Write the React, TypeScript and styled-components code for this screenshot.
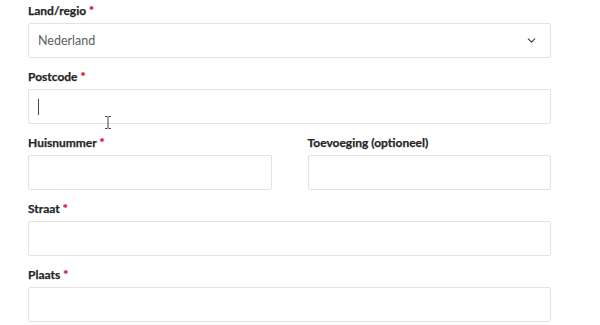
import styled, { createGlobalStyle } from "styled-components";
import { ChevronDown } from "lucide-react";

const GlobalStyle = createGlobalStyle`
  html, body {
    margin: 0;
    background: #ffffff;
    font-family: Lato, "Open Sans", sans-serif;
  }
`;

export default function App() {
  return (
    <>
      <GlobalStyle />
      <Form>
        <Field>
          <Label>
            Land/regio <Required>*</Required>
          </Label>
          <Box>
            <Value>Nederland</Value>
            <ChevronDown size={13} strokeWidth={2} color="#3a3a3a" />
          </Box>
        </Field>
        <Field>
          <Label>
            Postcode <Required>*</Required>
          </Label>
          <Box>
            <Caret />
          </Box>
        </Field>
        <Row>
          <Field>
            <Label>
              Huisnummer <Required>*</Required>
            </Label>
            <Box />
          </Field>
          <Field>
            <Label>Toevoeging (optioneel)</Label>
            <Box />
          </Field>
        </Row>
        <Field>
          <Label>
            Straat <Required>*</Required>
          </Label>
          <Box />
        </Field>
        <Field>
          <Label>
            Plaats <Required>*</Required>
          </Label>
          <Box />
        </Field>
        <MouseCursor width="8" height="13" viewBox="0 0 8 13">
          <path
            d="M1 0.5h2.2L4 1.4l0.8-0.9H7M4 1.4v10.2M1 12.5h2.2L4 11.6l0.8 0.9H7"
            fill="none"
            stroke="#444"
            strokeWidth="1"
          />
        </MouseCursor>
      </Form>
    </>
  );
}

const Form = styled.div`
  position: relative;
  width: 523px;
  padding: 3px 0 0 28px;
  display: flex;
  flex-direction: column;
  gap: 11px;
`;

const Field = styled.div`
  display: flex;
  flex-direction: column;
  gap: 4px;
  flex: 1;
`;

const Row = styled.div`
  display: flex;
  gap: 36px;
`;

const Label = styled.label`
  font-size: 12px;
  line-height: 16px;
  font-weight: 700;
  color: #262626;
  -webkit-text-stroke: 0.25px #262626;
`;

const Required = styled.span`
  color: #e0102b;
  -webkit-text-stroke: 0.25px #e0102b;
`;

const Box = styled.div`
  box-sizing: border-box;
  height: 35px;
  border: 1px solid #e3e3e3;
  border-radius: 2px;
  background: #fff;
  display: flex;
  align-items: center;
  justify-content: space-between;
  padding: 0 12px 0 9px;
`;

const Value = styled.span`
  font-size: 12.5px;
  color: #5e5e5e;
`;

const Caret = styled.span`
  width: 1px;
  height: 16px;
  background: #444;
`;

const MouseCursor = styled.svg`
  position: absolute;
  left: 104px;
  top: 116px;
`;
